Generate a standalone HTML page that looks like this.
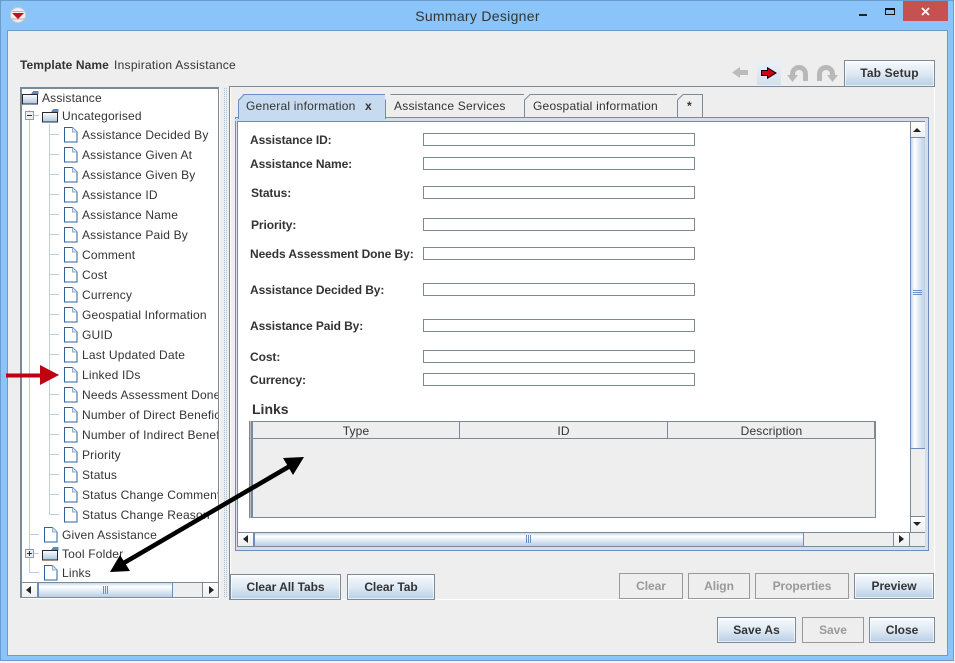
<!DOCTYPE html>
<html><head><meta charset="utf-8">
<style>
html,body{margin:0;padding:0;width:955px;height:663px;overflow:hidden;background:#fff}
#w{position:relative;width:955px;height:663px;background:#fff;overflow:hidden;font-family:"Liberation Sans",Arial,sans-serif;font-size:12px;color:#333}
#w div,#w span.t{position:absolute;white-space:nowrap}
.t{line-height:14px}
.b{font-weight:bold}
.btn{box-sizing:border-box;height:26px;line-height:24px;text-align:center;font-weight:bold;letter-spacing:-.05px;border:1px solid #7a8a99;color:#333;background:linear-gradient(#fff 0%,#eef4fa 15%,#dfe9f4 50%,#b8cfe5 100%);box-shadow:inset 0 0 0 1px rgba(255,255,255,.65)}
.dis{box-sizing:border-box;height:26px;line-height:24px;text-align:center;font-weight:bold;letter-spacing:-.05px;border:1px solid #999;color:#999;background:#eee}
.f{box-sizing:border-box;left:423px;width:272px;height:13px;border:1px solid #7a8a99;background:#fff}
.tab{box-sizing:border-box;top:94px;height:24px;border:1px solid #7a8a99;border-bottom:none;background:#eee;line-height:23px;color:#333;padding-left:8px;letter-spacing:.22px}
.sb{box-sizing:border-box;background:#eee}
.bt{box-sizing:border-box;background:linear-gradient(#fff,#eee);border:1px solid #7a8a99}
.lab{font-weight:bold;line-height:14px;letter-spacing:-.08px}
svg{position:absolute;overflow:visible}
.row{line-height:14px;letter-spacing:.18px}
</style></head><body>
<div id="w">
<!-- outer frame -->
<div style="left:0;top:0;width:954px;height:661px;box-sizing:border-box;background:#8ac4f8;border:1px solid #6d9ccc"></div>
<div style="left:0;top:661px;width:955px;height:2px;background:#f4f4f4"></div>
<div style="left:954px;top:0;width:1px;height:663px;background:#f4f4f4"></div>
<!-- client -->
<div style="left:7px;top:30px;width:941px;height:626px;box-sizing:border-box;border:1px solid #6d9ccc;background:#eee"></div>
<!-- title -->
<svg style="left:10px;top:7px" width="16" height="16" viewBox="0 0 16 16"><circle cx="8" cy="8" r="7.500" fill="#eee" stroke="#ccc"/><path d="M2.500 4.500h11M1.500 12h13" stroke="#c9a9a9"/><path d="M2 6h12L8 12z" fill="#c01020"/></svg>
<span class="t" style="left:0;top:8px;width:955px;text-align:center;font-size:14px;line-height:16px;color:#333;letter-spacing:.3px">Summary Designer</span>
<div style="left:859px;top:14px;width:8px;height:2px;background:#222"></div>
<div style="left:885px;top:8px;width:10px;height:7px;box-sizing:border-box;border:1px solid #111;border-top-width:2px"></div>
<div style="left:903px;top:1px;width:45px;height:20px;background:#c75050"></div>
<svg style="left:921px;top:7px" width="9" height="9" viewBox="0 0 9 9"><path d="M1 1l7 7M8 1l-7 7" stroke="#fff" stroke-width="1.800"/></svg>
<!-- template -->
<span class="t b" style="left:20px;top:58px;letter-spacing:.08px">Template Name</span>
<span class="t" style="left:114px;top:58px;letter-spacing:.27px">Inspiration Assistance</span>
<!-- toolbar -->
<svg style="left:732px;top:66px" width="16" height="13" viewBox="0 0 16 13"><path d="M0 6.500L8 1v3h8v5H8v3z" fill="#bbb"/></svg>
<div style="left:757px;top:61px;width:24px;height:24px;background:linear-gradient(#eaf1f8,#d3e1ef)"></div>
<svg style="left:761px;top:67px" width="16" height="12" viewBox="0 0 16 12"><path d="M.5 3.500h6V.8L15 6l-8.500 5.200V8.500h-6z" fill="#d00010" stroke="#000"/></svg>
<svg style="left:787px;top:65px" width="22" height="18" viewBox="0 0 22 18"><path d="M5.500 12V9a6.500 6.500 0 0 1 13 0v7" fill="none" stroke="#b8b8b8" stroke-width="5"/><path d="M0 10l5.500 7L11 10z" fill="#b8b8b8"/></svg>
<svg style="left:816px;top:65px" width="22" height="18" viewBox="0 0 22 18"><path d="M16.500 12V9a6.500 6.500 0 0 0-13 0v7" fill="none" stroke="#b8b8b8" stroke-width="5"/><path d="M22 10l-5.500 7L11 10z" fill="#b8b8b8"/></svg>
<div class="btn" style="left:844px;top:60px;width:91px;height:27px;line-height:25px;letter-spacing:.15px">Tab Setup</div>

<!-- tree -->
<div style="left:20px;top:87px;width:199px;height:511px;box-sizing:border-box;background:#fff;border:2px solid #7a8a99;border-right:1px solid #7a8a99;border-bottom:1px solid #7a8a99;box-shadow:1px 1px 0 #fff"></div>
<div style="left:29px;top:110px;width:1px;height:463px;background:#b8cfe5"></div>
<div style="left:49px;top:124px;width:1px;height:391px;background:#b8cfe5"></div>
<svg style="left:0;top:0" width="230" height="600">
<defs>
<g id="d"><path d="M.5 .5h8l4.500 4.500v10H.5z" fill="#fff" stroke="#2e6399"/><path d="M8.500 .5v4.500h4.500" fill="#dce8f4" stroke="#8fb0d4"/></g>
<g id="fo"><path d="M9.500 3l2-2.500h4.500v3" fill="#5f86bd" stroke="#5f86bd"/><rect x=".5" y="3.500" width="15" height="9.500" fill="url(#gf)" stroke="#2a2a2a"/></g>
<linearGradient id="gf" x1="0" y1="0" x2="0" y2="1"><stop offset="0" stop-color="#fff"/><stop offset="1" stop-color="#a8c4e0"/></linearGradient>
</defs>
<g stroke="#b8cfe5"><path d="M30 115.500h9M50 134.500h9M50 154.500h9M50 174.500h9M50 194.500h9M50 214.500h9M50 234.500h9M50 254.500h9M50 274.500h9M50 294.500h9M50 314.500h9M50 334.500h9M50 354.500h9M50 374.500h9M50 394.500h9M50 414.500h9M50 434.500h9M50 454.500h9M50 474.500h9M50 494.500h9M50 514.500h9M30 534.500h9M30 553.500h9M30 572.500h9"/></g>
<use href="#fo" x="22" y="91"/><use href="#fo" x="42" y="109"/><use href="#fo" x="42" y="547"/>
<use href="#d" x="64" y="127"/><use href="#d" x="64" y="147"/><use href="#d" x="64" y="167"/><use href="#d" x="64" y="187"/><use href="#d" x="64" y="207"/><use href="#d" x="64" y="227"/><use href="#d" x="64" y="247"/><use href="#d" x="64" y="267"/><use href="#d" x="64" y="287"/><use href="#d" x="64" y="307"/><use href="#d" x="64" y="327"/><use href="#d" x="64" y="347"/><use href="#d" x="64" y="367"/><use href="#d" x="64" y="387"/><use href="#d" x="64" y="407"/><use href="#d" x="64" y="427"/><use href="#d" x="64" y="447"/><use href="#d" x="64" y="467"/><use href="#d" x="64" y="487"/><use href="#d" x="64" y="507"/>
<use href="#d" x="44" y="527"/><use href="#d" x="44" y="565"/>
<rect x="25.500" y="111.500" width="8" height="8" fill="#eee" stroke="#999"/><path d="M27 115.500h5" stroke="#234"/>
<rect x="25.500" y="549.500" width="8" height="8" fill="#eee" stroke="#999"/><path d="M27 553.500h5M29.500 551v5" stroke="#234"/>
</svg>
<div style="left:22px;top:89px;width:196px;height:495px;overflow:hidden;background:none">
<span class="t row" style="left:20px;top:2px">Assistance</span>
<span class="t row" style="left:40px;top:20px">Uncategorised</span>
<span class="t row" style="left:60px;top:39px">Assistance Decided By</span>
<span class="t row" style="left:60px;top:59px">Assistance Given At</span>
<span class="t row" style="left:60px;top:79px">Assistance Given By</span>
<span class="t row" style="left:60px;top:99px">Assistance ID</span>
<span class="t row" style="left:60px;top:119px">Assistance Name</span>
<span class="t row" style="left:60px;top:139px">Assistance Paid By</span>
<span class="t row" style="left:60px;top:159px">Comment</span>
<span class="t row" style="left:60px;top:179px">Cost</span>
<span class="t row" style="left:60px;top:199px">Currency</span>
<span class="t row" style="left:60px;top:219px">Geospatial Information</span>
<span class="t row" style="left:60px;top:239px">GUID</span>
<span class="t row" style="left:60px;top:259px">Last Updated Date</span>
<span class="t row" style="left:60px;top:279px">Linked IDs</span>
<span class="t row" style="left:60px;top:299px">Needs Assessment Done By</span>
<span class="t row" style="left:60px;top:319px">Number of Direct Beneficiaries</span>
<span class="t row" style="left:60px;top:339px">Number of Indirect Beneficiaries</span>
<span class="t row" style="left:60px;top:359px">Priority</span>
<span class="t row" style="left:60px;top:379px">Status</span>
<span class="t row" style="left:60px;top:399px">Status Change Comment</span>
<span class="t row" style="left:60px;top:419px">Status Change Reason</span>
<span class="t row" style="left:40px;top:439px">Given Assistance</span>
<span class="t row" style="left:40px;top:458px">Tool Folder</span>
<span class="t row" style="left:40px;top:477px">Links</span>
</div>
<!-- tree hscroll -->
<div class="sb" style="left:22px;top:582px;width:196px;height:15px;border-top:1px solid #7a8a99"></div>
<div class="bt" style="left:22px;top:582px;width:16px;height:15px;border-left:none;border-bottom:none"></div>
<div class="bt" style="left:202px;top:582px;width:16px;height:15px;border-right:none;border-bottom:none"></div>
<div style="left:38px;top:583px;width:135px;height:14px;box-sizing:border-box;border:1px solid #6d8cbf;border-width:0 1px;background:linear-gradient(#c6d8ea,#fff 25%,#b8cfe5)"></div>
<svg style="left:0;top:0" width="230" height="600"><path d="M31 586v8l-5-4zM209 586v8l5-4z" fill="#222"/><path d="M103.500 586v8M105.500 586v8M107.500 586v8" stroke="#6d8cbf"/></svg>

<!-- splitter -->
<div style="left:224px;top:88px;width:3px;height:510px;background:repeating-linear-gradient(#aebfd0 0 1px,transparent 1px 2px);-webkit-mask:linear-gradient(90deg,#000 1px,transparent 1px 2px,#000 2px)"></div>
<!-- right panel -->
<div style="left:229px;top:86px;width:615px;height:1px;background:#7a8a99"></div>
<div style="left:229px;top:86px;width:1px;height:514px;background:#7a8a99"></div>
<div style="left:230px;top:87px;width:1px;height:512px;background:#fff"></div>
<div style="left:934px;top:87px;width:1px;height:513px;background:#fff"></div>
<div style="left:230px;top:599px;width:705px;height:1px;background:#fff"></div>

<!-- tabs -->
<div class="tab" style="left:385px;width:140px;padding-left:8px">Assistance Services</div>
<div class="tab" style="left:524px;width:154px;padding-left:8px">Geospatial information</div>
<div class="tab" style="left:677px;width:26px;font-weight:bold;padding-left:9px">*</div>
<!-- tab content border -->
<div style="left:235px;top:117px;width:694px;height:434px;box-sizing:border-box;border:1px solid #6d8cbf;background:#c6dbf0"></div>
<div style="left:236px;top:118px;width:692px;height:432px;background:#d4dfea"></div>
<div style="left:237px;top:121px;width:688px;height:426px;box-sizing:border-box;border:1px solid #7a8a99;background:#fff"></div>
<div class="tab" style="left:238px;width:148px;height:27px;background:#c6dbf0;border-color:#6d8cbf;z-index:2;padding-left:7px">General information<span style="position:absolute;left:126px;top:0;font-weight:bold;letter-spacing:0">x</span></div>
<div style="left:235px;top:119px;width:151px;height:2px;background:#c6dbf0;z-index:3"></div>
<svg style="left:0;top:0;z-index:4" width="955" height="125">
<path d="M524 94h6l-6 6zM677 94h6l-6 6zM385 94h6l-6 6z" fill="#eee"/>
<path d="M524.500 100L530 94.500M677.500 100L683 94.500" stroke="#7a8a99" fill="none"/>
<path d="M237 94h6.500l-6.500 7z" fill="#eee"/>
<path d="M238.500 100.500L244 94.500" stroke="#6d8cbf" fill="none"/>
</svg>

<!-- labels -->
<span class="t lab" style="left:250px;top:133px">Assistance ID:</span><div class="f" style="top:133px"></div>
<span class="t lab" style="left:250px;top:157px">Assistance Name:</span><div class="f" style="top:157px"></div>
<span class="t lab" style="left:251px;top:186px">Status:</span><div class="f" style="top:186px"></div>
<span class="t lab" style="left:251px;top:218px">Priority:</span><div class="f" style="top:218px"></div>
<span class="t lab" style="left:250px;top:247px">Needs Assessment Done By:</span><div class="f" style="top:247px"></div>
<span class="t lab" style="left:250px;top:283px">Assistance Decided By:</span><div class="f" style="top:283px"></div>
<span class="t lab" style="left:250px;top:319px">Assistance Paid By:</span><div class="f" style="top:319px"></div>
<span class="t lab" style="left:250px;top:350px">Cost:</span><div class="f" style="top:350px"></div>
<span class="t lab" style="left:250px;top:373px">Currency:</span><div class="f" style="top:373px"></div>
<span class="t b" style="left:252px;top:402px;font-size:14px">Links</span>

<!-- table -->
<div style="left:249px;top:421px;width:627px;height:97px;box-sizing:border-box;background:#eee;border-bottom:1px solid #7a8a99;border-right:1px solid #7a8a99"></div>
<div style="left:249px;top:421px;width:4px;height:97px;box-sizing:border-box;background:#bbb;border:1px solid #7a8a99;border-width:0 2px 0 1px"></div>
<div style="left:253px;top:421px;width:623px;height:18px;box-sizing:border-box;border-top:1px solid #7a8a99;border-bottom:1px solid #7a8a99;background:#eee"></div>
<div style="left:459px;top:421px;width:1px;height:17px;background:#7a8a99"></div>
<div style="left:667px;top:421px;width:1px;height:17px;background:#7a8a99"></div>
<div style="left:874px;top:421px;width:2px;height:17px;background:#7a8a99"></div>
<span class="t" style="left:253px;top:424px;width:206px;text-align:center;letter-spacing:.15px">Type</span>
<span class="t" style="left:460px;top:424px;width:207px;text-align:center;letter-spacing:.15px">ID</span>
<span class="t" style="left:668px;top:424px;width:207px;text-align:center;letter-spacing:.15px">Description</span>

<!-- v scroll -->
<div class="sb" style="left:910px;top:122px;width:15px;height:410px;border-left:1px solid #7a8a99"></div>
<div class="bt" style="left:910px;top:122px;width:15px;height:16px;border-top:none;border-right:none"></div>
<div style="left:910px;top:138px;width:15px;height:311px;box-sizing:border-box;border:1px solid #6d8cbf;border-width:0 0 1px 1px;background:linear-gradient(90deg,#c6d8ea,#fff 25%,#b8cfe5)"></div>
<div class="bt" style="left:910px;top:516px;width:15px;height:16px;border-right:none;border-bottom:none"></div>
<svg style="left:0;top:0" width="955" height="560"><path d="M913 132h8l-4-4zM913 522h8l-4 4z" fill="#222"/><path d="M913 290.500h9M913 292.500h9M913 294.500h9" stroke="#6d8cbf"/></svg>
<!-- h scroll -->
<div class="sb" style="left:238px;top:532px;width:672px;height:14px;border-top:1px solid #7a8a99"></div>
<div class="bt" style="left:238px;top:532px;width:16px;height:14px;border-left:none;border-bottom:none"></div>
<div class="bt" style="left:893px;top:532px;width:16px;height:14px;border-right:none;border-bottom:none"></div>
<div style="left:909px;top:532px;width:16px;height:14px;background:#eee;box-sizing:border-box;border-top:1px solid #7a8a99;border-left:1px solid #7a8a99"></div>
<div style="left:254px;top:533px;width:550px;height:13px;box-sizing:border-box;border:1px solid #6d8cbf;border-width:0 1px;background:linear-gradient(#c6d8ea,#fff 25%,#b8cfe5)"></div>
<svg style="left:0;top:0" width="955" height="560"><path d="M248 535v8l-5-4zM899 535v8l5-4z" fill="#222"/><path d="M526.500 535v8M528.500 535v8M530.500 535v8" stroke="#6d8cbf"/></svg>

<!-- buttons -->
<div class="btn" style="left:230px;top:574px;width:111px">Clear All Tabs</div>
<div class="btn" style="left:347px;top:574px;width:88px">Clear Tab</div>
<div class="dis" style="left:619px;top:573px;width:64px">Clear</div>
<div class="dis" style="left:688px;top:573px;width:62px">Align</div>
<div class="dis" style="left:755px;top:573px;width:94px">Properties</div>
<div class="btn" style="left:854px;top:573px;width:80px">Preview</div>
<div class="btn" style="left:717px;top:617px;width:79px;letter-spacing:.05px">Save As</div>
<div class="dis" style="left:802px;top:617px;width:62px">Save</div>
<div class="btn" style="left:869px;top:617px;width:66px">Close</div>

<!-- arrows -->
<svg style="left:0;top:0;z-index:9" width="955" height="663">
<path d="M6 375.500h36" stroke="#c00010" stroke-width="4"/><path d="M40 365l19 10-19 10z" fill="#c00010"/>
<path d="M122 564L290 466" stroke="#000" stroke-width="4.500"/>
<path d="M110 572L120 555L130 571zM304 457L283 458L293 475z" fill="#000"/>
</svg>
</div>
</body></html>
